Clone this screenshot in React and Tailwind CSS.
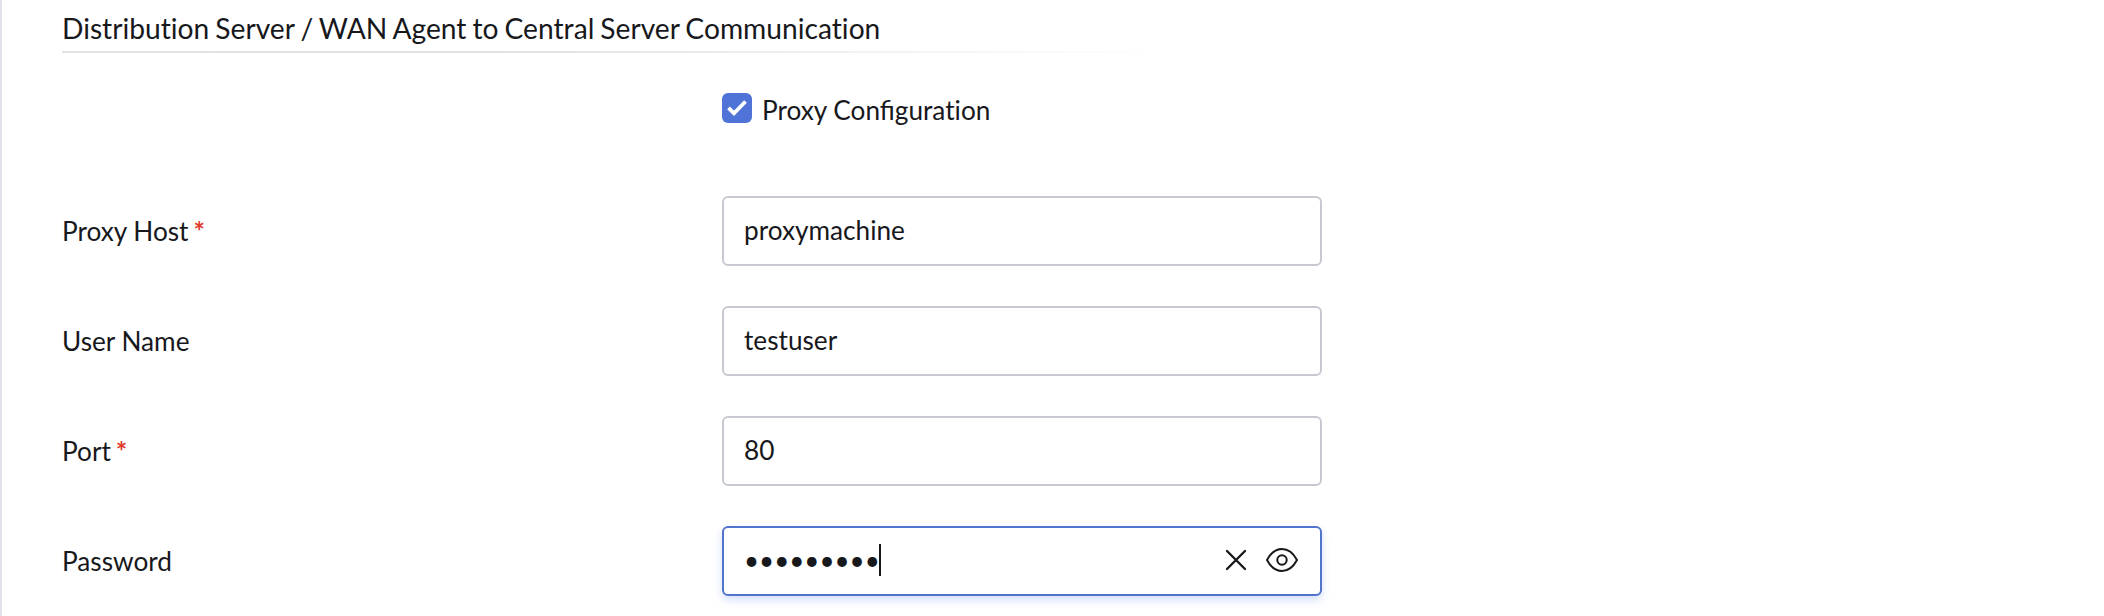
function Field({ label, required, focused, children }) {
  return (
    <div className="flex h-[70px] items-center">
      <label className="w-[660px] shrink-0 leading-8">
        {label}
        {required && <span className="ml-[5px] text-[27px] leading-none font-bold text-[#e03a2b]">*</span>}
      </label>
      <div
        className={
          focused
            ? "flex h-[70px] w-[600px] items-center rounded-[6px] border-2 border-[#5274cc] bg-white pr-[21px] pb-0.5 pl-5 shadow-[0_4px_8px_rgba(60,110,240,0.22)]"
            : "flex h-[70px] w-[600px] items-center rounded-[6px] border-2 border-[#c8c8d0] bg-white px-5 pb-0.5"
        }
      >
        {children}
      </div>
    </div>
  );
}

export default function App() {
  return (
    <main className="h-[616px] overflow-hidden border-l-2 border-[#e2e2ea] bg-white pl-[60px] font-['Lato',sans-serif] text-[26.2px] text-[#17181c]">
      <h1 className="h-[51px] pt-[11px] text-[28.2px] leading-[34px] [font-variant-ligatures:none] [word-spacing:-1.2px]">
        Distribution Server / WAN Agent to Central Server Communication
      </h1>
      <div className="h-0.5 w-[1100px] bg-linear-to-r from-[#e2e2e2] from-40% to-white" />

      <div className="ml-[660px] mt-10 flex h-[34px] items-start">
        <span className="flex size-[30px] items-center justify-center rounded-[6px] bg-[#4f73d6]">
          <svg viewBox="0 0 30 30" className="size-[30px]" fill="none" stroke="white" strokeWidth="3.8">
            <path d="M6.5 14.8 12 20.3 23.5 8.5" />
          </svg>
        </span>
        <span className="ml-2.5 pt-px leading-8">
          Proxy Configurat<span className="[font-variant-ligatures:none]">ion</span>
        </span>
      </div>

      <div className="mt-[69px] flex flex-col gap-10">
        <Field label="Proxy Host" required>
          <span className="leading-8">proxymachine</span>
        </Field>
        <Field label="User Name">
          <span className="leading-8">testuser</span>
        </Field>
        <Field label="Port" required>
          <span className="leading-8">80</span>
        </Field>
        <Field label="Password" focused>
          <span className="text-[26px] leading-8">•••••••••</span>
          <span className="-ml-px h-8 w-0.5 bg-[#17181c]" />
          <svg viewBox="0 0 22 22" className="ml-auto size-[22px]" fill="none" stroke="#17181c" strokeWidth="2.3" strokeLinecap="round">
            <path d="M2 2 20 20M20 2 2 20" />
          </svg>
          <svg viewBox="0 0 34 26" className="ml-[18px] h-[26px] w-[34px]" fill="none" stroke="#17181c" strokeWidth="2" strokeLinejoin="round">
            <path d="M2 13C5.5 6.5 10.5 2 17 2S28.500 6.500 32 13C28.500 19.500 23.500 24 17 24S5.500 19.500 2 13Z" />
            <circle cx="17" cy="13" r="4.700" />
          </svg>
        </Field>
      </div>
    </main>
  );
}
